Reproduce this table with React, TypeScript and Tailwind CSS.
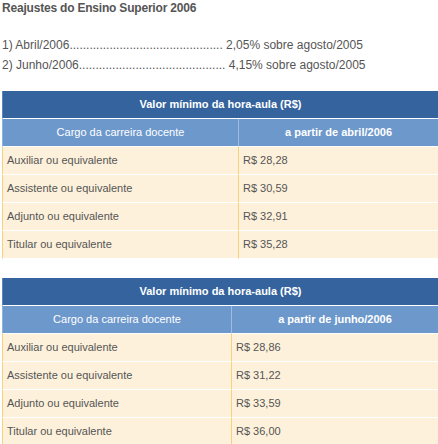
const rowsAbril = [
  ['Auxiliar ou equivalente', 'R$ 28,28'],
  ['Assistente ou equivalente', 'R$ 30,59'],
  ['Adjunto ou equivalente', 'R$ 32,91'],
  ['Titular ou equivalente', 'R$ 35,28'],
];

const rowsJunho = [
  ['Auxiliar ou equivalente', 'R$ 28,86'],
  ['Assistente ou equivalente', 'R$ 31,22'],
  ['Adjunto ou equivalente', 'R$ 33,59'],
  ['Titular ou equivalente', 'R$ 36,00'],
];

function SalaryTable({ period, rows, firstCol }: { period: string; rows: string[][]; firstCol: string }) {
  return (
    <table className="border-separate border-spacing-0 w-[436px] ml-[2px] table-fixed">
      <colgroup>
        <col className={firstCol} />
        <col />
      </colgroup>
      <thead>
        <tr>
          <th colSpan={2} className="h-[28px] p-0 bg-[#34639e] border-l border-l-[#5b86bf] border-b border-b-white text-white text-[11px] font-bold text-center">
            Valor mínimo da hora-aula (R$)
          </th>
        </tr>
        <tr>
          <th className="h-[28px] p-0 bg-[#6d98cc] border-l border-l-[#8fb3e0] border-b border-b-white text-white text-[11px] font-normal text-center">
            Cargo da carreira docente
          </th>
          <th className="h-[28px] p-0 bg-[#6d98cc] border-l border-l-[#9dbde6] border-b border-b-white text-white text-[11px] font-bold text-center">
            {period}
          </th>
        </tr>
      </thead>
      <tbody>
        {rows.map(([cargo, valor]) => (
          <tr key={cargo}>
            <td className="h-[28px] py-0 px-[4px] bg-[#fdf1db] border-l border-l-[#f6d27c] border-b border-b-white text-[#555] text-[11px]">
              {cargo}
            </td>
            <td className="h-[28px] py-0 px-[4px] bg-[#fdf1db] border-l border-l-[#f6d27c] border-b border-b-white text-[#555] text-[11px]">
              {valor}
            </td>
          </tr>
        ))}
      </tbody>
    </table>
  );
}

export default function App() {
  return (
    <div className="w-[438px] h-[444px] overflow-hidden bg-white text-[#555] font-['Liberation_Sans',Arial,sans-serif]">
      <h1 className="pl-[2px] text-[12px] leading-[16px] font-bold tracking-[-0.2px]">Reajustes do Ensino Superior 2006</h1>
      <div className="mt-[19px] pl-[2px] text-[12px] leading-[20px]">
        <p>1) Abril/2006.............................................. 2,05% sobre agosto/2005</p>
        <p>2) Junho/2006............................................ 4,15% sobre agosto/2005</p>
      </div>
      <div className="mt-[16px]">
        <SalaryTable period="a partir de abril/2006" rows={rowsAbril} firstCol="w-[236px]" />
      </div>
      <div className="mt-[19px]">
        <SalaryTable period="a partir de junho/2006" rows={rowsJunho} firstCol="w-[229px]" />
      </div>
    </div>
  );
}
